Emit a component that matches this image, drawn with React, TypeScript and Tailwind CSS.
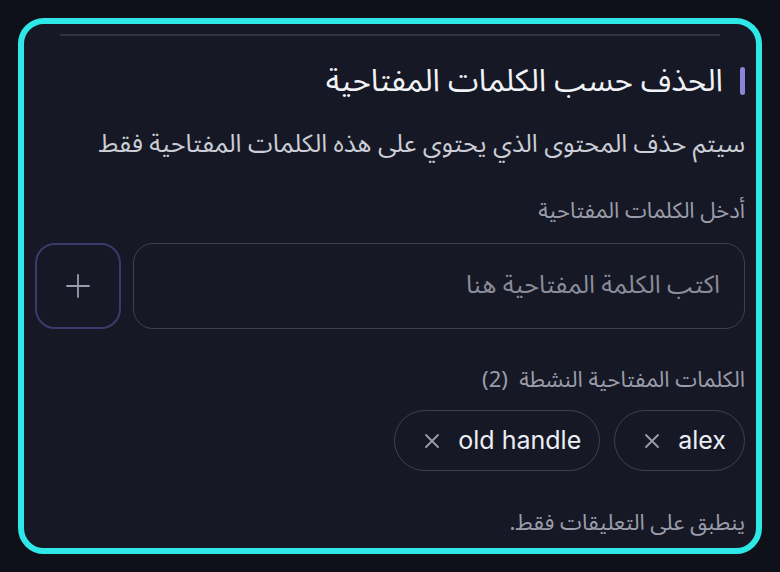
import React from "react";

const AR = { fontFamily: '"Noto Sans Arabic", "DejaVu Sans", Inter, sans-serif' };
const LAT = { fontFamily: 'Inter, "Noto Sans", sans-serif' };

function Chip({ label }: { label: string }) {
  return (
    <div className="flex items-center h-[61px] rounded-full border-[1.5px] border-[#3d404e] pr-[18px] pl-[29px] gap-[18px]">
      <span className="text-[25px] leading-none text-[#eceef5]" style={LAT}>{label}</span>
      <svg width="16" height="16" viewBox="0 0 16 16" className="text-[#9a9cab]">
        <path d="M2 2 L14 14 M14 2 L2 14" stroke="currentColor" strokeWidth="1.8" strokeLinecap="round" />
      </svg>
    </div>
  );
}

export default function App() {
  return (
    <div className="w-[780px] h-[572px] bg-[#0f111a] p-[18px]">
      <div
        dir="rtl"
        className="h-[536px] w-[744px] rounded-[26px] border-[6px] border-[#2ee8e8] bg-[#161925] overflow-hidden px-[11px] flex flex-col"
        style={AR}
      >
        <div className="mt-[10px] mx-[25px] h-[2px] bg-[#2f3240]" />
        <div className="flex items-center gap-[17px] mt-[30px] h-[30px]">
          <div className="w-[5px] h-[28px] rounded-full bg-[#8a84d6]" />
          <h2 className="text-[31px] leading-none text-[#f1f2f6]">الحذف حسب الكلمات المفتاحية</h2>
        </div>
        <p className="mt-[30px] text-[25px] leading-[36px] text-[#cbcdd7]">
          سيتم حذف المحتوى الذي يحتوي على هذه الكلمات المفتاحية فقط
        </p>
        <div className="mt-[34px] text-[22px] leading-[30px] text-[#9b9dab]">أدخل الكلمات المفتاحية</div>
        <div className="mt-[17px] flex gap-[12px]">
          <div className="flex-1 h-[86px] rounded-[20px] border-[1.5px] border-[#3d404e] flex items-center pr-[24px] text-[25px] text-[#8a8c99]">
            اكتب الكلمة المفتاحية هنا
          </div>
          <button className="w-[86px] h-[86px] rounded-[20px] border-2 border-[#3b3a6c] flex items-center justify-center text-[#9a9cb0]">
            <svg width="24" height="24" viewBox="0 0 24 24">
              <path d="M12 1 V23 M1 12 H23" stroke="currentColor" strokeWidth="1.8" strokeLinecap="round" />
            </svg>
          </button>
        </div>
        <div className="mt-[36px] text-[22px] leading-[30px] text-[#9b9dab]">
          الكلمات المفتاحية النشطة{"\u00a0"} (2)
        </div>
        <div className="mt-[15px] flex gap-[14px]">
          <Chip label="alex" />
          <Chip label="old handle" />
        </div>
        <div className="mt-[37px] text-[22px] leading-[30px] text-[#9b9dab]">ينطبق على التعليقات فقط.</div>
      </div>
    </div>
  );
}
